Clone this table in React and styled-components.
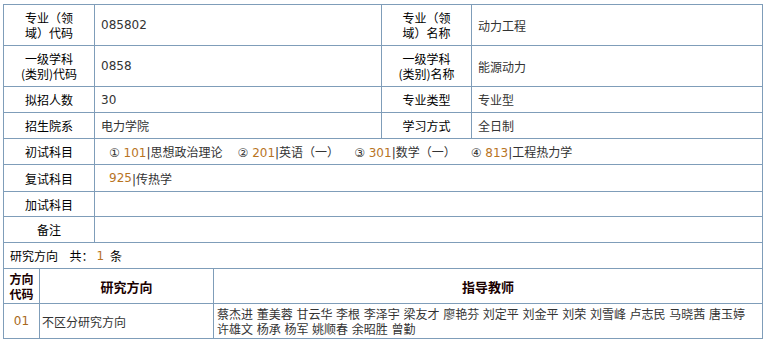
import styled, { createGlobalStyle } from 'styled-components';

const Global = createGlobalStyle`
  body {
    margin: 0;
    background: #fff;
    font-family: "DejaVu Sans", "Noto Sans CJK SC", sans-serif;
    font-size: 12px;
    color: #333;
  }
`

const line = '#7f9db9'

const Page = styled.div`
  padding: 4px 0 0 3px;
`

const Sheet = styled.div`
  width: 760px;
  box-sizing: border-box;
  border-top: 1px solid ${line};
  border-left: 1px solid ${line};
`

const InfoGrid = styled.div`
  display: grid;
  grid-template-columns: 91px 287px 90px 291px;
  grid-template-rows: 41px 41px 26px 26px 26px 27px 25px 26px;
`

const Cell = styled.div`
  box-sizing: border-box;
  border-right: 1px solid ${line};
  border-bottom: 1px solid ${line};
  display: flex;
  align-items: center;
  grid-column: ${p => p.$span ? `span ${p.$span}` : 'auto'};
`

const Label = styled(Cell)`
  justify-content: center;
  text-align: center;
  color: #000;
  line-height: 15px;
  font-family: "Noto Sans CJK SC", sans-serif;
`

const Value = styled(Cell)`
  padding-left: ${p => p.$pad || 6}px;
  color: #333;
  white-space: nowrap;
`

const Num = styled.span`
  color: #b8741f;
  margin: ${p => p.$gap ? '0 6px 0 3px' : '0'};
`

const Subject = styled.span`
  margin-right: 15px;
`

const CountRow = styled(Cell)`
  height: 26px;
  padding-left: 6px;
  color: #000;
`

const DirGrid = styled.div`
  display: grid;
  grid-template-columns: 36px 174px 549px;
  grid-template-rows: 35px 35px;
`

const Head = styled(Cell)`
  justify-content: center;
  text-align: center;
  font-family: "Noto Sans CJK SC", sans-serif;
  font-weight: 700;
  font-size: ${p => p.$size || 13}px;
  line-height: 15px;
  color: #1a0000;
`

const Code = styled(Cell)`
  justify-content: center;
  color: #a8691a;
`

const DirName = styled(Cell)`
  padding-left: 2px;
  font-family: "Noto Sans CJK SC", sans-serif;
`

const Teachers = styled(Cell)`
  padding: 0 4px 0 3px;
  line-height: 15px;
  font-family: "Noto Sans CJK SC", sans-serif;
  word-spacing: 1px;
`

const teachers = '蔡杰进 董美蓉 甘云华 李根 李泽宇 梁友才 廖艳芬 刘定平 刘金平 刘荣 刘雪峰 卢志民 马晓茜 唐玉婷 许雄文 杨承 杨军 姚顺春 余昭胜 曾勤'

const subjects = [
  ['①', '101', '思想政治理论'],
  ['②', '201', '英语（一）'],
  ['③', '301', '数学（一）'],
  ['④', '813', '工程热力学'],
]

export default function App() {
  return (
    <Page>
      <Global />
      <Sheet>
        <InfoGrid>
          <Label>专业（领<br />域）代码</Label>
          <Value>085802</Value>
          <Label>专业（领<br />域）名称</Label>
          <Value>动力工程</Value>

          <Label>一级学科<br />(类别)代码</Label>
          <Value>0858</Value>
          <Label>一级学科<br />(类别)名称</Label>
          <Value>能源动力</Value>

          <Label>拟招人数</Label>
          <Value>30</Value>
          <Label>专业类型</Label>
          <Value>专业型</Value>

          <Label>招生院系</Label>
          <Value>电力学院</Value>
          <Label>学习方式</Label>
          <Value>全日制</Value>

          <Label>初试科目</Label>
          <Value $span={3} $pad={14}>
            {subjects.map(s => (
              <Subject key={s[1]}>
                {s[0]} <Num>{s[1]}</Num>|{s[2]}
              </Subject>
            ))}
          </Value>

          <Label>复试科目</Label>
          <Value $span={3} $pad={14}><Num>925</Num>|传热学</Value>

          <Label>加试科目</Label>
          <Value $span={3} />

          <Label>备注</Label>
          <Value $span={3} />
        </InfoGrid>

        <CountRow>研究方向&nbsp;&nbsp;&nbsp;共：<Num $gap>1</Num>条</CountRow>

        <DirGrid>
          <Head $size={12}>方向<br />代码</Head>
          <Head>研究方向</Head>
          <Head>指导教师</Head>

          <Code>01</Code>
          <DirName>不区分研究方向</DirName>
          <Teachers>{teachers}</Teachers>
        </DirGrid>
      </Sheet>
    </Page>
  );
}
